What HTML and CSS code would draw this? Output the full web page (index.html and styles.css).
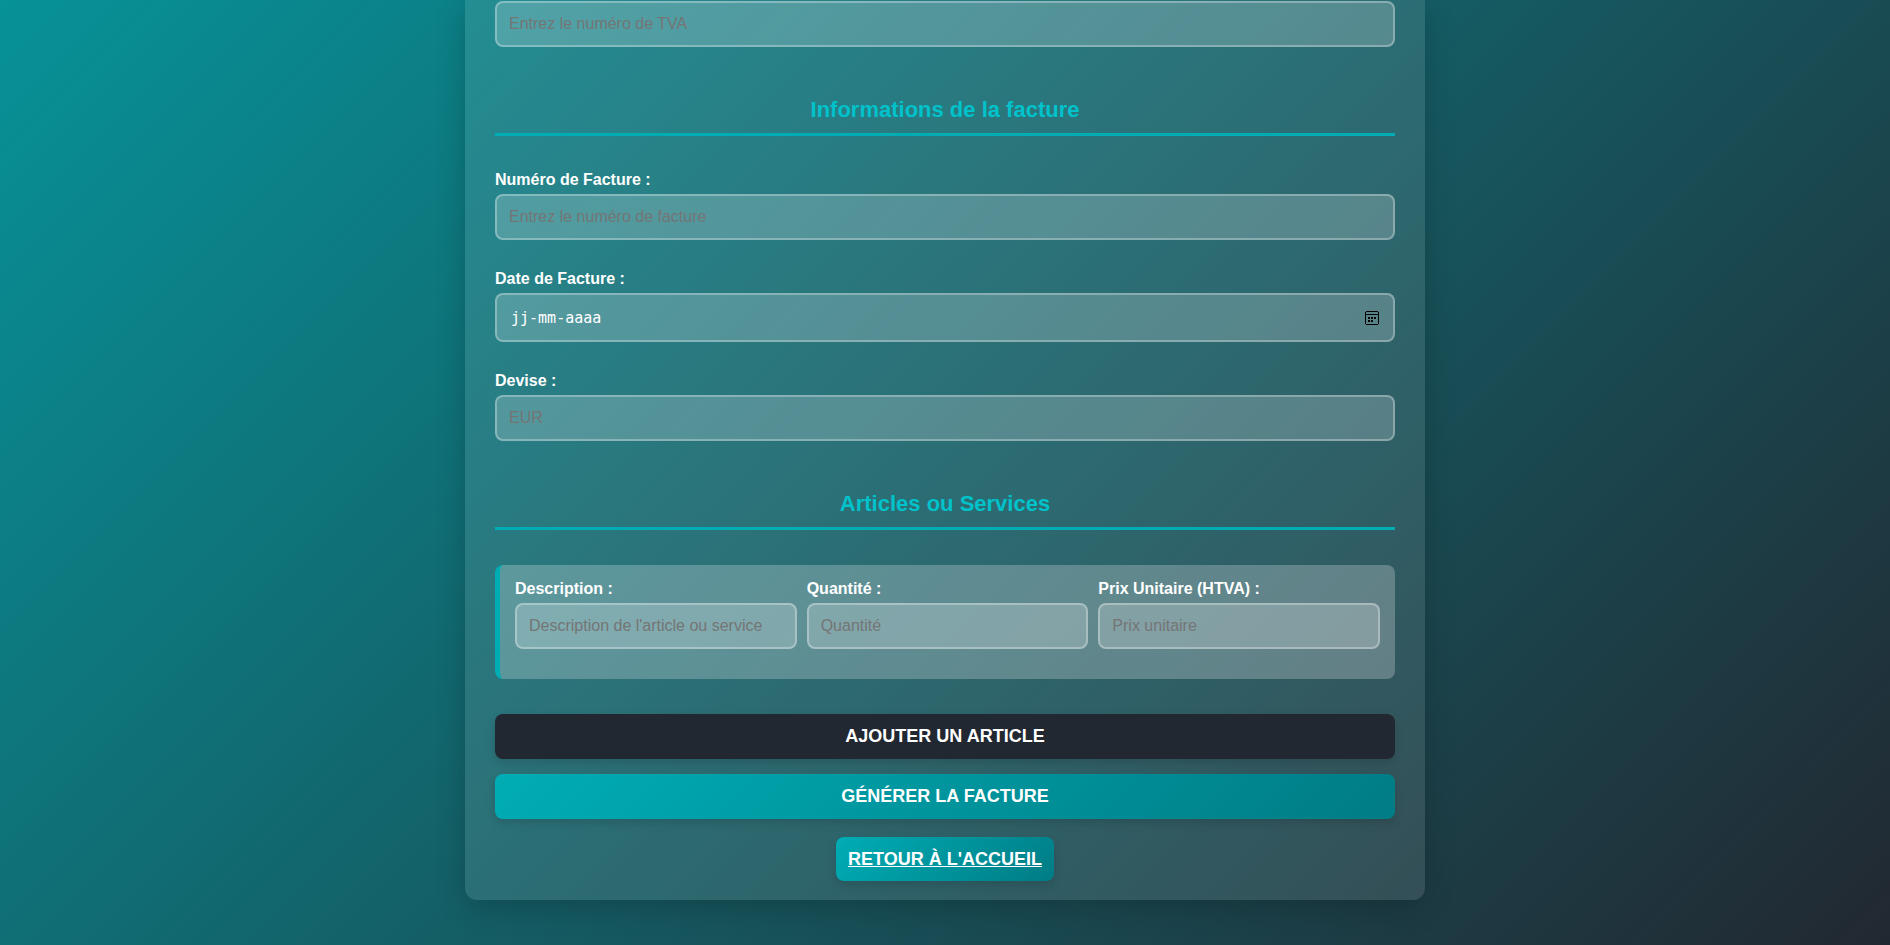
FILE: index.html
```html
<!DOCTYPE html>
<html lang="fr">
<head>
<meta charset="utf-8">
<title>Facture</title>
<link rel="stylesheet" href="styles.css">
</head>
<body>
<main class="container">
  <form class="invoice">
    <div class="field">
      <input type="text" aria-label="Numéro de TVA" placeholder="Entrez le numéro de TVA">
    </div>

    <h2>Informations de la facture</h2>
    <div class="field">
      <label for="numero">Numéro de Facture :</label>
      <input type="text" id="numero" placeholder="Entrez le numéro de facture">
    </div>
    <div class="field">
      <label for="date">Date de Facture :</label>
      <div class="date-box">
        <input type="text" id="date" class="date-input" placeholder="jj-mm-aaaa">
        <button type="button" class="picker" aria-label="Choisir une date">
          <svg width="14" height="14" viewBox="0 0 14 14" shape-rendering="crispEdges">
            <path d="M1 0h12v1H1zM0 1h1v12H0zM13 1h1v12h-1zM1 13h12v1H1zM1 3h12v1H1zM3 6h2v2H3zM6 6h2v2H6zM9 6h2v2H9zM3 9h2v2H3zM6 9h2v2H6z"/>
          </svg>
        </button>
      </div>
    </div>
    <div class="field">
      <label for="devise">Devise :</label>
      <input type="text" id="devise" placeholder="EUR">
    </div>

    <h2>Articles ou Services</h2>
    <div class="item">
      <div class="field">
        <label for="description">Description :</label>
        <input type="text" id="description" placeholder="Description de l'article ou service">
      </div>
      <div class="field">
        <label for="quantite">Quantité :</label>
        <input type="text" id="quantite" placeholder="Quantité">
      </div>
      <div class="field">
        <label for="prix">Prix Unitaire (HTVA) :</label>
        <input type="text" id="prix" placeholder="Prix unitaire">
      </div>
    </div>

    <div class="actions">
      <button type="button" class="btn btn-dark">Ajouter un article</button>
      <button type="submit" class="btn">Générer la facture</button>
    </div>
  </form>
  <a class="btn home" href="#">Retour à l'accueil</a>
</main>
</body>
</html>
```
FILE: styles.css
```css
* {
  box-sizing: border-box;
}

body {
  margin: 0;
  min-height: 100vh;
  padding-bottom: 45px;
  background: linear-gradient(135deg, #079298, #222831);
  color: #fff;
  font: 16px/18px "Liberation Sans", Arial, sans-serif;
}

.container {
  display: flex;
  flex-direction: column;
  align-items: center;
  gap: 18px;
  max-width: 960px;
  margin: 0 auto;
  padding: 1px 30px 19px;
  border-radius: 0 0 12px 12px;
  background: rgba(255, 255, 255, 0.1);
  box-shadow: 0 8px 30px rgba(0, 0, 0, 0.2);
}

.invoice {
  width: 100%;
}

h2 {
  margin: 20px 0 35px;
  padding-bottom: 10px;
  border-bottom: 3px solid #00adb5;
  color: #00c2cb;
  font-size: 22px;
  line-height: 26px;
  text-align: center;
}

.field {
  display: flex;
  flex-direction: column;
  gap: 5px;
  padding-bottom: 30px;
}

label {
  font-weight: bold;
}

input {
  width: 100%;
  height: 46px;
  padding: 12px;
  border: 2px solid rgba(255, 255, 255, 0.3);
  border-radius: 8px;
  background: rgba(255, 255, 255, 0.2);
  color: #fff;
  font: inherit;
}

input::placeholder {
  color: #757575;
}

.date-box {
  position: relative;
}

.date-input {
  display: block;
  height: 49px;
  padding-left: 14px;
  font-family: "DejaVu Sans Mono", monospace;
  font-size: 15px;
}

.date-input::placeholder {
  color: #fff;
}

.picker {
  position: absolute;
  top: 0;
  bottom: 0;
  right: 16px;
  display: flex;
  align-items: center;
  padding: 0;
  border: 0;
  background: none;
}

.item {
  display: grid;
  grid-template-columns: repeat(3, 1fr);
  gap: 10px;
  margin-bottom: 35px;
  padding: 15px 15px 0;
  border-left: 5px solid #00adb5;
  border-radius: 8px;
  background: rgba(255, 255, 255, 0.24);
}

.item input {
  background: rgba(255, 255, 255, 0.22);
}

.actions {
  display: flex;
  flex-direction: column;
  gap: 15px;
}

.btn {
  padding: 12px;
  border: 0;
  border-radius: 8px;
  background: linear-gradient(135deg, #00adb5, #007c85);
  box-shadow: 0 4px 10px rgba(0, 0, 0, 0.13);
  color: #fff;
  font: bold 18px/21px "Liberation Sans", Arial, sans-serif;
  text-align: center;
  text-transform: uppercase;
}

.btn-dark {
  background: #222831;
}

.home {
  line-height: 20px;
}
```
